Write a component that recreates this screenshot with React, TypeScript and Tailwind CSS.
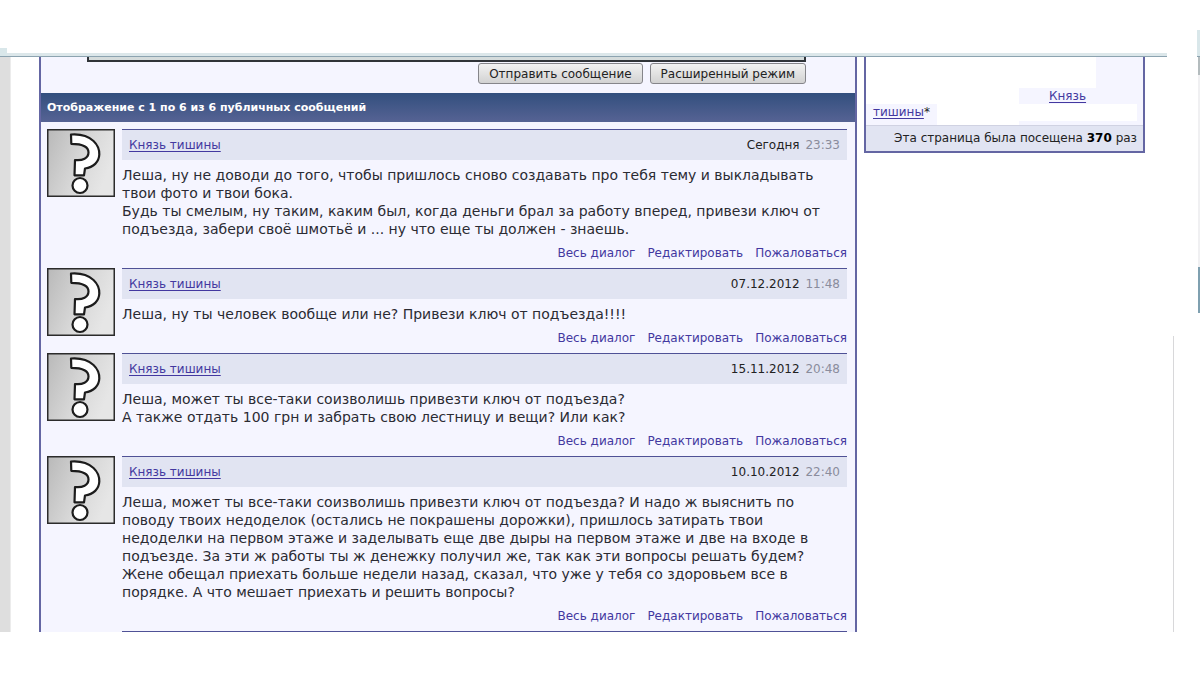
import React from 'react'

interface Message {
  id: number
  author: string
  date: string
  time: string
  lines: string[]
}

const messages: Message[] = [
  {
    id: 1,
    author: 'Князь тишины',
    date: 'Сегодня',
    time: '23:33',
    lines: [
      'Леша, ну не доводи до того, чтобы пришлось сново создавать про тебя тему и выкладывать',
      'твои фото и твои бока.',
      'Будь ты смелым, ну таким, каким был, когда деньги брал за работу вперед, привези ключ от',
      'подъезда, забери своё шмотьё и ... ну что еще ты должен - знаешь.',
    ],
  },
  {
    id: 2,
    author: 'Князь тишины',
    date: '07.12.2012',
    time: '11:48',
    lines: ['Леша, ну ты человек вообще или не? Привези ключ от подъезда!!!!'],
  },
  {
    id: 3,
    author: 'Князь тишины',
    date: '15.11.2012',
    time: '20:48',
    lines: [
      'Леша, может ты все-таки соизволишь привезти ключ от подъезда?',
      'А также отдать 100 грн и забрать свою лестницу и вещи? Или как?',
    ],
  },
  {
    id: 4,
    author: 'Князь тишины',
    date: '10.10.2012',
    time: '22:40',
    lines: [
      'Леша, может ты все-таки соизволишь привезти ключ от подъезда? И надо ж выяснить по',
      'поводу твоих недоделок (остались не покрашены дорожки), пришлось затирать твои',
      'недоделки на первом этаже и заделывать еще две дыры на первом этаже и две на входе в',
      'подъезде. За эти ж работы ты ж денежку получил же, так как эти вопросы решать будем?',
      'Жене обещал приехать больше недели назад, сказал, что уже у тебя со здоровьем все в',
      'порядке. А что мешает приехать и решить вопросы?',
    ],
  },
]

const actions = ['Весь диалог', 'Редактировать', 'Пожаловаться']

const Avatar: React.FC = () => (
  <svg viewBox="0 0 68 68" className="size-17 shrink-0" aria-hidden="true">
    <defs>
      <linearGradient id="avatar-bg" x1="0" y1="0" x2="1" y2="0.4">
        <stop offset="0" stopColor="#b9b9b9" />
        <stop offset="0.6" stopColor="#d8d8d8" />
        <stop offset="1" stopColor="#e6e6e6" />
      </linearGradient>
    </defs>
    <rect x="0.75" y="0.75" width="66.5" height="66.5" fill="url(#avatar-bg)" stroke="#2b2b2b" strokeWidth="1.5" />
    <path
      d="M24 5.500C33 4.800 41 7 46.500 12C50.500 15.800 52.500 20 52.300 25.500C52 33 46.500 38.300 38 39.500L37 46.300H27.500L28 31C35.500 32 41.500 29 41.500 23.500C41.500 18 35.500 14.800 24.300 14.800Z"
      fill="#fff"
      stroke="#1c1c1c"
      strokeWidth="2.200"
      strokeLinejoin="round"
    />
    <circle cx="33" cy="56.500" r="7.500" fill="#fff" stroke="#1c1c1c" strokeWidth="2.200" />
  </svg>
)

const MessageItem: React.FC<{ message: Message }> = ({ message }) => (
  <li className="flex gap-[7px]">
    <Avatar />
    <div className="min-w-0 flex-1 pb-1.5">
      <div className="flex h-[31px] items-center justify-between border-t border-[#4f5196] bg-[#e1e4f2] px-[7px] text-xs">
        <a href="#author" className="text-[#4338a0] underline underline-offset-2">{message.author}</a>
        <div className="text-[#222]">
          {message.date} <span className="ml-0.5 text-[#8a8c9c]">{message.time}</span>
        </div>
      </div>
      <p className="mt-1.5 text-sm leading-[18px] whitespace-pre text-[#2b2b33]">{message.lines.join('\n')}</p>
      <div className="mt-1.5 flex justify-end gap-3 text-xs leading-[18px] text-[#4338a0]">
        {actions.map((action) => (
          <a key={action} href="#action">{action}</a>
        ))}
      </div>
    </div>
  </li>
)

const FormButton: React.FC<{ children: React.ReactNode }> = ({ children }) => (
  <button
    type="button"
    className="h-[21px] rounded-[3px] border border-[#85858a] bg-linear-to-b from-[#f2f2f2] to-[#d2d2d2] px-2.5 text-xs leading-[18px] text-[#222]"
  >
    {children}
  </button>
)

const MessagesPanel: React.FC = () => (
  <main className="min-w-0 flex-1 border-x-2 border-[#6466a3] bg-[#f5f5ff]">
    <div className="pr-[49px] pl-[46px]">
      <div className="h-[5px] border-x-2 border-b-2 border-[#2f3338] bg-[#d5dcdc]" />
      <div className="flex justify-end gap-[7px] pt-px pb-[9px]">
        <FormButton>Отправить сообщение</FormButton>
        <FormButton>Расширенный режим</FormButton>
      </div>
    </div>
    <h2 className="h-[29px] bg-linear-to-b from-[#324f7e] to-[#566394] px-1.5 text-[11px] leading-[29px] font-bold text-white">
      Отображение с 1 по 6 из 6 публичных сообщений
    </h2>
    <ul className="pt-[7px] pr-2 pl-1.5">
      {messages.map((message) => (
        <MessageItem key={message.id} message={message} />
      ))}
      <li className="ml-[75px] border-t border-[#4f5196]" />
    </ul>
  </main>
)

const VisitorsPanel: React.FC = () => (
  <aside className="w-[281px] shrink-0 self-start border-x-2 border-b-2 border-[#6466a3] bg-white text-xs leading-4">
    <div className="flex h-[31px] justify-end">
      <div className="w-[47px] bg-[#f5f5ff]" />
    </div>
    <div className="flex h-4 justify-end">
      <div className="w-[124px] bg-[#f5f5ff] pl-[30px]">
        <a href="#visitor" className="text-[#4338a0] underline underline-offset-2">Князь</a>
      </div>
    </div>
    <div className="flex h-[21px] justify-between">
      <div className="bg-[#f5f5ff] px-[7px]">
        <a href="#visitor" className="text-[#4338a0] underline underline-offset-2">тишины</a>
        <span className="text-[#222]">*</span>
      </div>
      <div className="w-[124px] border-r-[6px] border-b-4 border-[#f5f5ff]" />
    </div>
    <p className="h-[26px] border-t border-[#d0d2e2] bg-[#e1e4f2] pr-1.5 text-right leading-[25px] text-[#222]">
      Эта страница была посещена <b className="text-black">370</b> раз
    </p>
  </aside>
)

// Strip to the right of the panels with the page rule and the window edge
const RightEdge: React.FC = () => (
  <div className="flex w-[55px] shrink-0 justify-between pl-7">
    <div className="mt-[279px] w-px bg-[#d8d8da]" />
    <div className="flex w-0.5 flex-col">
      <div className="h-[18px] bg-[#b4bcbe]" />
      <div className="h-48 bg-[#f0f0f2]" />
      <div className="h-[46px] bg-[#7fa0b0]" />
    </div>
  </div>
)

const TopBar: React.FC = () => (
  <header className="flex h-[57px] items-end justify-between">
    <div className="h-[9px] w-[7px] border-b border-[#8ca3b0] bg-[#d9e7ea]" />
    <div className="h-1 flex-1 border-b border-[#8ca3b0] bg-[#dce7ea]" />
    <div className="flex w-[33px] justify-end">
      <div className="h-[27px] w-[3px] border-b border-[#8ca3b0] bg-[#d9e7ea]" />
    </div>
  </header>
)

const App: React.FC = () => {
  return (
    <div className="flex min-h-screen flex-col bg-white font-['DejaVu_Sans',Verdana,sans-serif]">
      <TopBar />
      <div className="flex">
        <div className="mr-7 w-[11px] shrink-0 border-r border-[#ececec] bg-[#dedede]" />
        <MessagesPanel />
        <div className="w-[7px] shrink-0" />
        <VisitorsPanel />
        <RightEdge />
      </div>
    </div>
  )
}

export default App
